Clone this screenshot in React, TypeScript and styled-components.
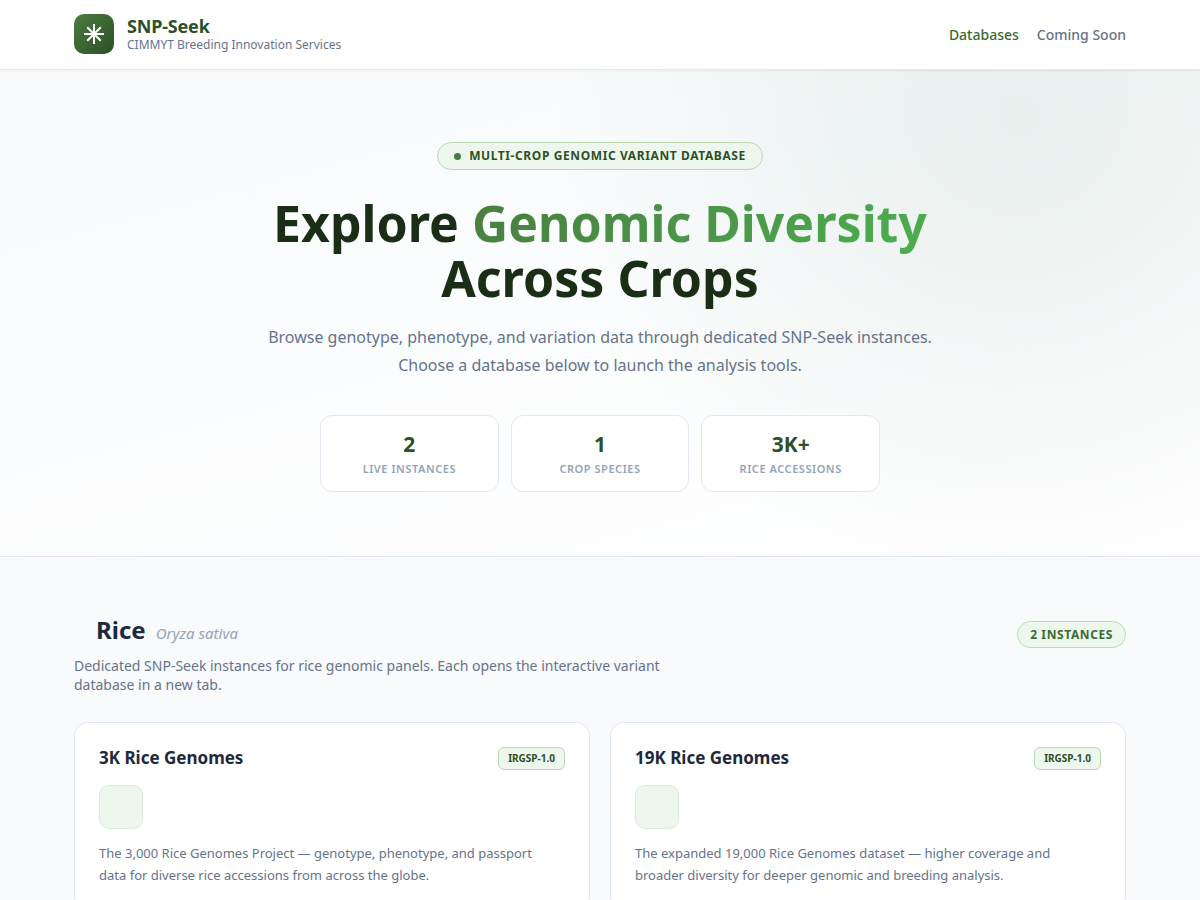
import React from 'react';
import styled, { createGlobalStyle } from 'styled-components';

const GlobalStyle = createGlobalStyle`
  *, *::before, *::after { box-sizing: border-box; }
  body {
    margin: 0;
    background: #f8fafc;
    color: #1e293b;
    font-family: 'Noto Sans', sans-serif;
    font-size: 16px;
  }
  h1, h2, h3, p, dl, dd { margin: 0; }
`;

const Container = styled.div`
  max-width: 1100px;
  margin: 0 auto;
  padding: 0 24px;
`;

const Header = styled.header`
  position: relative;
  z-index: 1;
  background: #ffffff;
  border-bottom: 1px solid #e2e8f0;
  box-shadow: 0 1px 3px rgba(0, 0, 0, 0.06);
`;

const HeaderBar = styled(Container)`
  display: flex;
  align-items: center;
  justify-content: space-between;
  padding-top: 14px;
  padding-bottom: 15px;
`;

const Brand = styled.a`
  display: flex;
  align-items: center;
  gap: 13px;
  text-decoration: none;
`;

const Logo = styled.span`
  display: grid;
  place-items: center;
  width: 40px;
  height: 40px;
  border-radius: 10px;
  background: linear-gradient(135deg, #4a7c3f, #2d5026);
`;

const BrandText = styled.span`
  display: flex;
  flex-direction: column;
`;

const BrandName = styled.span`
  font-size: 18px;
  line-height: 22px;
  font-weight: 700;
  letter-spacing: -0.01em;
  color: #2d5026;
`;

const BrandTagline = styled.span`
  font-size: 12px;
  line-height: 16px;
  color: #64748b;
`;

const Nav = styled.nav`
  display: flex;
  gap: 18px;
`;

const NavLink = styled.a<{ $active?: boolean }>`
  font-size: 14px;
  line-height: 19px;
  font-weight: 500;
  text-decoration: none;
  color: ${(p) => (p.$active ? '#3a6b30' : '#64748b')};
`;

const Hero = styled.section`
  padding: 72px 0 64px;
  border-bottom: 1px solid #e2e8f0;
  text-align: center;
  background:
    radial-gradient(circle at 85% 10%, rgba(45, 106, 79, 0.09), transparent 42%),
    linear-gradient(165deg, #f8fafc, #ffffff);
`;

const Pill = styled.span<{ $large?: boolean }>`
  display: inline-flex;
  align-items: center;
  gap: 8px;
  flex-shrink: 0;
  padding: ${(p) => (p.$large ? '5px 16px' : '4px 12px')};
  border: 1px solid #b8dab4;
  border-radius: 999px;
  background: #eef7ed;
  font-size: 12px;
  line-height: ${(p) => (p.$large ? '16px' : '17px')};
  font-weight: 700;
  letter-spacing: 0.05em;
  text-transform: uppercase;
  color: ${(p) => (p.$large ? '#2d5026' : '#3a6b30')};
`;

const Dot = styled.span`
  width: 7px;
  height: 7px;
  border-radius: 50%;
  background: #4a7c3f;
`;

const HeroContent = styled(Container)`
  display: flex;
  flex-direction: column;
  align-items: center;
`;

const HeroTitle = styled.h1`
  margin-top: 26px;
  font-size: 50px;
  line-height: 55px;
  font-weight: 700;
  color: #1a2e16;
`;

const Highlight = styled.span`
  background: linear-gradient(135deg, #4a7c3f, #4caf50);
  background-clip: text;
  -webkit-background-clip: text;
  color: transparent;
`;

const HeroLead = styled.p`
  margin-top: 17px;
  font-size: 16px;
  line-height: 28px;
  color: #64748b;
`;

const Stats = styled.dl`
  display: grid;
  grid-template-columns: repeat(3, 1fr);
  gap: 12px;
  width: 100%;
  max-width: 560px;
  margin-top: 36px;
`;

const Stat = styled.div`
  display: flex;
  flex-direction: column-reverse;
  gap: 2px;
  padding: 14px 12px;
  border: 1px solid #e2e8f0;
  border-radius: 12px;
  background: #ffffff;
`;

const StatLabel = styled.dt`
  font-size: 11px;
  line-height: 17px;
  font-weight: 600;
  letter-spacing: 0.05em;
  text-transform: uppercase;
  color: #94a3b8;
`;

const StatValue = styled.dd`
  font-size: 21px;
  line-height: 28px;
  font-weight: 700;
  color: #2d5026;
`;

const Main = styled.main`
  padding: 56px 0 64px;
`;

const SectionHead = styled.div`
  display: flex;
  align-items: flex-start;
  justify-content: space-between;
  gap: 24px;
  margin-bottom: 28px;
`;

const SectionIntro = styled.div`
  max-width: 640px;
`;

const CropHeading = styled.div`
  display: flex;
  align-items: baseline;
  gap: 10px;
  padding-left: 22px;
`;

const CropName = styled.h2`
  font-size: 24px;
  line-height: 34px;
  font-weight: 700;
  color: #1e293b;
`;

const Species = styled.em`
  font-size: 15px;
  color: #94a3b8;
`;

const CropText = styled.p`
  margin-top: 9px;
  font-size: 14px;
  line-height: 19px;
  color: #64748b;
`;

const PillSlot = styled.div`
  display: flex;
  padding-top: 8px;
`;

const Cards = styled.div`
  display: grid;
  grid-template-columns: repeat(auto-fit, minmax(320px, 1fr));
  gap: 20px;
`;

const Card = styled.article`
  padding: 24px;
  border: 1px solid #e2e8f0;
  border-radius: 14px;
  background: #ffffff;
`;

const CardHead = styled.div`
  display: flex;
  align-items: flex-start;
  justify-content: space-between;
`;

const CardTitle = styled.h3`
  font-size: 17px;
  line-height: 22px;
  font-weight: 700;
  color: #1e293b;
`;

const Assembly = styled.span`
  padding: 3px 9px;
  border: 1px solid #b8dab4;
  border-radius: 6px;
  background: #eef7ed;
  font-size: 10px;
  line-height: 15px;
  font-weight: 700;
  color: #2d5026;
`;

const Tile = styled.div`
  width: 44px;
  height: 44px;
  margin-top: 15px;
  border: 1px solid #d8ebd6;
  border-radius: 10px;
  background: #eef7ed;
`;

const CardText = styled.p`
  max-width: 460px;
  margin-top: 13px;
  font-size: 13px;
  line-height: 22px;
  color: #64748b;
`;

const stats = [
  { value: '2', label: 'Live Instances' },
  { value: '1', label: 'Crop Species' },
  { value: '3K+', label: 'Rice Accessions' },
];

const databases = [
  {
    title: '3K Rice Genomes',
    assembly: 'IRGSP-1.0',
    text: 'The 3,000 Rice Genomes Project — genotype, phenotype, and passport data for diverse rice accessions from across the globe.',
  },
  {
    title: '19K Rice Genomes',
    assembly: 'IRGSP-1.0',
    text: 'The expanded 19,000 Rice Genomes dataset — higher coverage and broader diversity for deeper genomic and breeding analysis.',
  },
];

export default function App() {
  return (
    <>
      <GlobalStyle />
      <Header>
        <HeaderBar>
          <Brand href="#">
            <Logo>
              <svg width="22" height="22" viewBox="0 0 22 22" fill="none" stroke="#fff" strokeWidth="2" aria-hidden="true">
                <path d="M11 1v20M1 11h20M4.2 4.2l13.6 13.6M17.8 4.2L4.2 17.8" />
              </svg>
            </Logo>
            <BrandText>
              <BrandName>SNP-Seek</BrandName>
              <BrandTagline>CIMMYT Breeding Innovation Services</BrandTagline>
            </BrandText>
          </Brand>
          <Nav>
            <NavLink href="#databases" $active>Databases</NavLink>
            <NavLink href="#coming-soon">Coming Soon</NavLink>
          </Nav>
        </HeaderBar>
      </Header>
      <Hero>
        <HeroContent>
          <Pill $large>
            <Dot />
            Multi-Crop Genomic Variant Database
          </Pill>
          <HeroTitle>
            Explore <Highlight>Genomic Diversity</Highlight>
            <br />
            Across Crops
          </HeroTitle>
          <HeroLead>
            Browse genotype, phenotype, and variation data through dedicated SNP-Seek instances.
            <br />
            Choose a database below to launch the analysis tools.
          </HeroLead>
          <Stats>
            {stats.map((s) => (
              <Stat key={s.label}>
                <StatLabel>{s.label}</StatLabel>
                <StatValue>{s.value}</StatValue>
              </Stat>
            ))}
          </Stats>
        </HeroContent>
      </Hero>
      <Main id="databases">
        <Container>
          <SectionHead>
            <SectionIntro>
              <CropHeading>
                <CropName>Rice</CropName>
                <Species>Oryza sativa</Species>
              </CropHeading>
              <CropText>
                Dedicated SNP-Seek instances for rice genomic panels. Each opens the interactive variant database in a
                new tab.
              </CropText>
            </SectionIntro>
            <PillSlot>
              <Pill>2 Instances</Pill>
            </PillSlot>
          </SectionHead>
          <Cards>
            {databases.map((d) => (
              <Card key={d.title}>
                <CardHead>
                  <CardTitle>{d.title}</CardTitle>
                  <Assembly>{d.assembly}</Assembly>
                </CardHead>
                <Tile />
                <CardText>{d.text}</CardText>
              </Card>
            ))}
          </Cards>
        </Container>
      </Main>
    </>
  );
}
